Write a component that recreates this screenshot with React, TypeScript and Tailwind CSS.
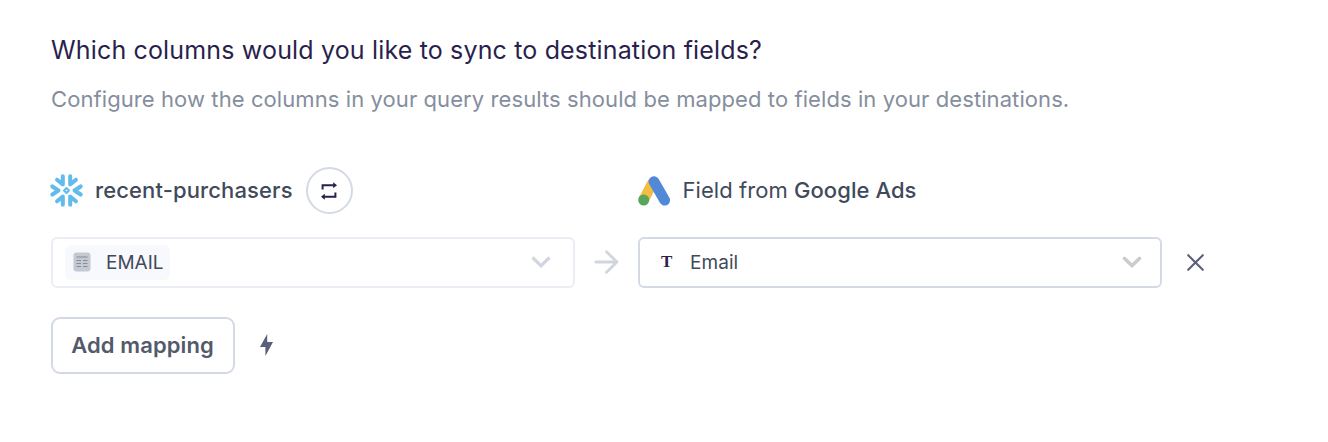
import type { ReactNode } from "react";

function SnowflakeLogo() {
  return (
    <svg className="h-[33px] w-[33px] shrink-0" viewBox="0 0 98 98" fill="none" stroke="#62bbea" strokeWidth="12" strokeLinecap="round" strokeLinejoin="round">
      <path d="M38 7V31L21 17" />
      <path d="M60 7V31L77 17" />
      <path d="M38 91V67L21 81" />
      <path d="M60 91V67L77 81" />
      <path d="M7 37L25 49L7 61" />
      <path d="M91 37L73 49L91 61" />
      <path d="M49 41.5L56.5 49L49 56.5L41.5 49Z" strokeWidth="6" />
    </svg>
  );
}

function GoogleAdsLogo() {
  return (
    <svg className="h-[30px] w-8 shrink-0" viewBox="0 0 32 30" fill="none" strokeLinecap="round">
      <path d="M5.6 24L15 6" stroke="#f2bd42" strokeWidth="10.4" strokeLinecap="butt" />
      <path d="M16 5.6L26.6 24.2" stroke="#5189d6" strokeWidth="10.8" />
      <circle cx="5.7" cy="24" r="5.5" fill="#58a55c" />
    </svg>
  );
}

function SwapIcon() {
  return (
    <svg className="h-[18px] w-[18px]" viewBox="0 0 18 18" fill="none" stroke="#2a1f4d" strokeWidth="2">
      <path d="M2.6 7.5V3.2H14" />
      <path d="M13.2 0.2L17 3.2L13.2 6.2Z" fill="#2a1f4d" stroke="none" />
      <path d="M15.4 10.5V14.8H4" />
      <path d="M4.8 11.8L1 14.8L4.8 17.8Z" fill="#2a1f4d" stroke="none" />
    </svg>
  );
}

function TableIcon() {
  return (
    <svg className="h-5 w-[18px] shrink-0" viewBox="0 0 18 20" fill="none">
      <rect x="0.5" y="0.5" width="17" height="19" rx="3" fill="#c5cad2" />
      <path d="M3.5 5H14.5M3.5 8.5H8M10 8.5H14.5M3.5 11.5H8M10 11.5H14.5M3.5 14.5H8M10 14.5H14.5" stroke="#848d9b" strokeWidth="1.2" />
    </svg>
  );
}

function Chevron({ className }: { className: string }) {
  return (
    <svg className={className} viewBox="0 0 20 14" fill="none" stroke="currentColor" strokeWidth="3.2">
      <path d="M1.5 2.5L10 10.8L18.5 2.5" />
    </svg>
  );
}

function Select({ className, children }: { className: string; children: ReactNode }) {
  return (
    <div className={`flex h-[51px] w-[524px] items-center justify-between rounded-md border-2 pr-[18px] pb-px ${className}`}>
      {children}
    </div>
  );
}

export default function App() {
  return (
    <main className="h-[442px] w-[1328px] bg-white pt-[34px] pl-[51px] font-['Inter',sans-serif] text-[#414a5b]">
      <h1 className="h-8 text-[25px] leading-8 tracking-[0.16px] whitespace-nowrap text-[#2a1f4d]">
        Which columns would you like to sync to destination fields?
      </h1>
      <p className="mt-[18px] h-[30px] text-[22px] leading-[30px] tracking-[0.085px] whitespace-nowrap text-[#858e9e]">
        Configure how the columns in your query results should be mapped to fields in your destinations.
      </p>

      <div className="mt-[53px] -ml-px flex h-[47px] items-center">
        <div className="flex w-[588px] items-center">
          <SnowflakeLogo />
          <span className="ml-3 text-[22px] leading-[27px] font-medium tracking-[0.12px] whitespace-nowrap">recent-purchasers</span>
          <button className="ml-[13px] flex size-[47px] items-center justify-center rounded-full border-2 border-[#d4dae5]">
            <SwapIcon />
          </button>
        </div>
        <GoogleAdsLogo />
        <span className="ml-[12.5px] text-[22px] leading-[27px] tracking-[0.06px] whitespace-nowrap">
          Field from <span className="font-medium">Google Ads</span>
        </span>
      </div>

      <div className="mt-[23px] flex items-center">
        <Select className="border-[#ebedf4] pl-3">
          <div className="flex h-[35px] w-[105px] items-center rounded-md bg-[#f8f9fc] pl-2">
            <TableIcon />
            <span className="ml-[15px] pt-px text-[19px] leading-6">EMAIL</span>
          </div>
          <Chevron className="mr-1 h-[14px] w-5 text-[#d0d6e0]" />
        </Select>
        <svg className="-mt-px ml-[19px] h-6 w-[25px]" viewBox="0 0 25 24" fill="none" stroke="#d0d6e0" strokeWidth="2.8" strokeLinecap="round" strokeLinejoin="round">
          <path d="M1.8 12H23M12.5 1.7L23 12L12.5 22.3" />
        </svg>
        <Select className="ml-[19px] border-[#d4dae5] pl-[21px]">
          <div className="flex items-center">
            <span className="w-[12px] font-['Liberation_Serif',serif] text-[17px] leading-6 font-bold text-[#2a1f4d]">T</span>
            <span className="ml-[17px] pt-px text-[19px] leading-6 tracking-[0.05px]">Email</span>
          </div>
          <svg className="h-[14px] w-5" viewBox="0 0 20 14" fill="none" stroke="#cccccc" strokeWidth="3.6" strokeLinecap="round">
            <path d="M2.5 3.5L10 10.5L17.5 3.5" />
          </svg>
        </Select>
        <svg className="-mt-px ml-[25px] size-[17px]" viewBox="0 0 17 17" fill="none" stroke="#5a607a" strokeWidth="2.1" strokeLinecap="round">
          <path d="M1.2 1.2L15.8 15.8M15.8 1.2L1.2 15.8" />
        </svg>
      </div>

      <div className="mt-[29px] flex items-center">
        <button className="h-[57px] w-[184px] rounded-[9px] border-2 border-[#d4dae5] pr-px pb-0.5 text-[22px] leading-7 font-semibold tracking-[0.1px] whitespace-nowrap text-[#535a6b]">
          Add mapping
        </button>
        <svg className="-mt-0.5 ml-[25px] h-[22px] w-[13px]" viewBox="0 0 13 22" fill="#5a607a">
          <path d="M7.2 0L0 13H5.4V22L13 8H7.2Z" />
        </svg>
      </div>
    </main>
  );
}
